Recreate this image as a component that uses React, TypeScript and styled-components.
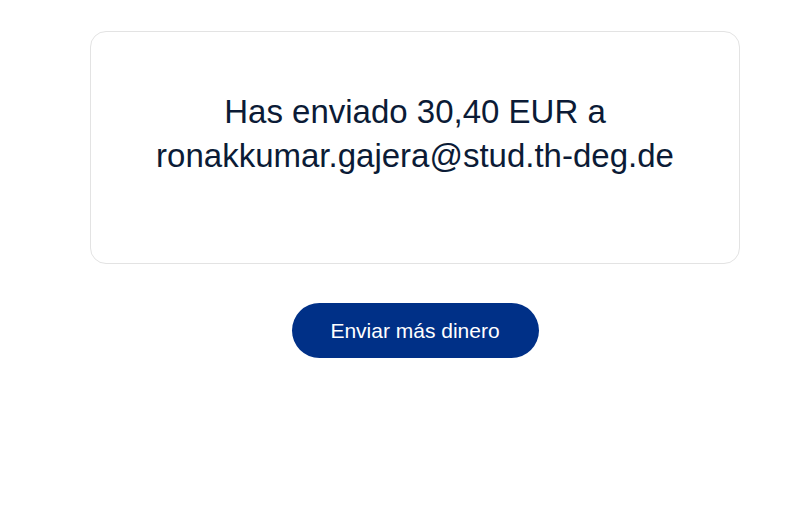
import styled, { createGlobalStyle } from 'styled-components';

const GlobalStyle = createGlobalStyle`
  html, body {
    margin: 0;
    padding: 0;
    background: #ffffff;
    font-family: 'Liberation Sans', Arial, sans-serif;
  }
`;

const Page = styled.main`
  width: 800px;
  height: 531px;
  box-sizing: border-box;
  padding: 31px 0 0 30px;
  display: flex;
  flex-direction: column;
  align-items: center;
  gap: 39px;
`;

const Card = styled.section`
  width: 650px;
  box-sizing: border-box;
  padding: 58px 20px 85px;
  border: 1px solid #e3e3e3;
  border-radius: 16px;
  background: #ffffff;
`;

const Message = styled.p`
  margin: 0;
  text-align: center;
  font-size: 33px;
  line-height: 44px;
  color: #0b1b36;
`;

const PrimaryButton = styled.button`
  width: 247px;
  height: 55px;
  border: none;
  border-radius: 28px;
  background: #003087;
  color: #ffffff;
  font-family: 'Liberation Sans', Arial, sans-serif;
  font-size: 21px;
  cursor: pointer;
`;

export default function App() {
  return (
    <>
      <GlobalStyle />
      <Page>
        <Card>
          <Message>
            Has enviado 30,40 EUR a
            <br />
            ronakkumar.gajera@stud.th-deg.de
          </Message>
        </Card>
        <PrimaryButton>Enviar más dinero</PrimaryButton>
      </Page>
    </>
  );
}
